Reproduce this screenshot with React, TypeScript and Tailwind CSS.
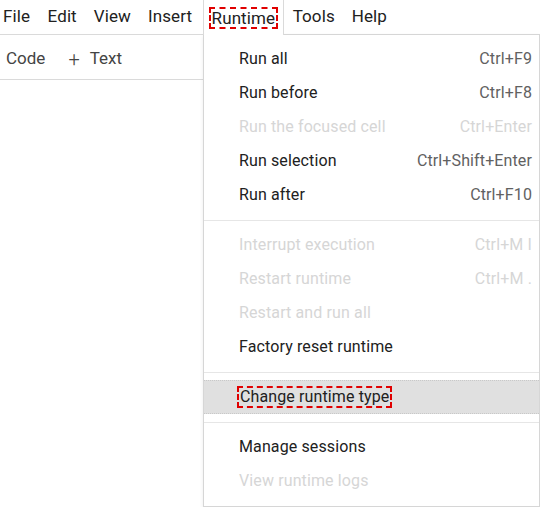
import React from "react";

type Item =
  | { kind: "item"; label: string; shortcut?: string; disabled?: boolean; active?: boolean }
  | { kind: "sep" };

const menuItems: Item[] = [
  { kind: "item", label: "Run all", shortcut: "Ctrl+F9" },
  { kind: "item", label: "Run before", shortcut: "Ctrl+F8" },
  { kind: "item", label: "Run the focused cell", shortcut: "Ctrl+Enter", disabled: true },
  { kind: "item", label: "Run selection", shortcut: "Ctrl+Shift+Enter" },
  { kind: "item", label: "Run after", shortcut: "Ctrl+F10" },
  { kind: "sep" },
  { kind: "item", label: "Interrupt execution", shortcut: "Ctrl+M I", disabled: true },
  { kind: "item", label: "Restart runtime", shortcut: "Ctrl+M .", disabled: true },
  { kind: "item", label: "Restart and run all", disabled: true },
  { kind: "item", label: "Factory reset runtime" },
  { kind: "sep" },
  { kind: "item", label: "Change runtime type", active: true },
  { kind: "sep" },
  { kind: "item", label: "Manage sessions" },
  { kind: "item", label: "View runtime logs", disabled: true },
];

const topMenus = ["File", "Edit", "View", "Insert", "Runtime", "Tools", "Help"];

export default function App() {
  return (
    <div className="relative w-[540px] h-[507px] bg-white overflow-hidden font-['Roboto','Liberation_Sans',sans-serif] text-[#212121]">
      {/* 메뉴 바 */}
      <div className="h-[35px] border-b border-[#dadada] flex items-center text-[17px] tracking-[0.1px]">
        {topMenus.map((m) =>
          m === "Runtime" ? (
            <div
              key={m}
              className="relative z-20 h-[35px] ml-[2px] px-[5px] flex items-center bg-white border-x border-[#dadada] -mb-px"
            >
              <span className="px-[1px] leading-[18px] border-2 border-dashed border-[#e00000]">
                {m}
              </span>
            </div>
          ) : (
            <div key={m} className={m === "File" ? "pl-[3px] pr-[9px]" : "px-[8.5px]"}>
              {m}
            </div>
          )
        )}
      </div>

      {/* 툴바 */}
      <div className="h-[45px] pt-[3px] border-b border-[#dadada] flex items-center text-[17px] text-[#444]">
        <span className="ml-[6px]">Code</span>
        <span className="ml-[23px] flex items-center gap-[10px]">
          <span className="text-[20px] leading-none font-light">+</span>
          Text
        </span>
      </div>

      {/* 드롭다운 */}
      <div className="absolute z-10 left-[203px] top-[34px] w-[337px] h-[473px] bg-white border border-[#d6d6d6] pt-[7px] text-[16px] tracking-[0.12px] shadow-[0_2px_4px_rgba(0,0,0,0.08)]">
        {menuItems.map((it, i) =>
          it.kind === "sep" ? (
            <div key={i} className="mt-[8px] mb-[7px] h-px bg-[#e6e6e6]" />
          ) : (
            <div
              key={i}
              className={
                "h-[34px] pl-[35px] pr-[7px] flex items-center justify-between " +
                (it.active ? "bg-[#e0e0e0] border-y border-dotted border-[#c8c8c8]" : "")
              }
            >
              {it.active ? (
                <span className="-ml-[2px] px-[1px] leading-[18px] border-2 border-dashed border-[#e00000]">
                  {it.label}
                </span>
              ) : (
                <span className={it.disabled ? "text-[#d6d6d6]" : "text-[#212121]"}>
                  {it.label}
                </span>
              )}
              {it.shortcut && (
                <span className={it.disabled ? "text-[#d6d6d6]" : "text-[#616161]"}>
                  {it.shortcut}
                </span>
              )}
            </div>
          )
        )}
      </div>
    </div>
  );
}
